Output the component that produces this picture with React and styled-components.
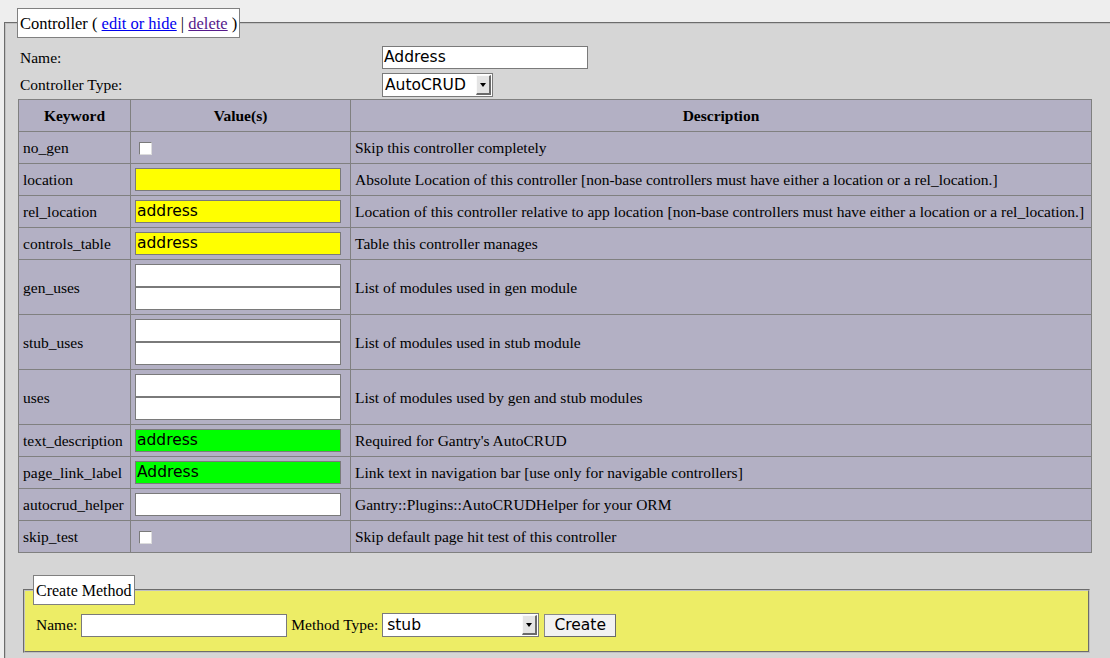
import React from 'react'
import styled, { createGlobalStyle } from 'styled-components'

const GlobalStyle = createGlobalStyle`
  html, body {
    margin: 0;
    padding: 0;
    background: #eeeeee;
    overflow: hidden;
    font-family: "Liberation Serif", "Times New Roman", serif;
    font-size: 15.5px;
    color: #000;
  }
`

const Page = styled.div`
  padding-top: 8px;
  padding-left: 4px;
  width: 1240px;
`

const Fieldset = styled.fieldset`
  margin: 0;
  border: 2px groove rgb(192, 192, 192);
  background: ${props => props.bg || '#d6d6d6'};
  padding: ${props => props.pad || '8px 12px 20px 12px'};
  width: ${props => props.width || 'auto'};
  margin-top: ${props => props.top || '0'};
  margin-left: ${props => props.left || '0'};
  box-sizing: border-box;
`

const Legend = styled.legend`
  background: #fff;
  border: 1px solid #808080;
  padding: 5px 2px 3px 2px;
  line-height: 20px;
  font-size: ${props => props.size || '16.5px'};
  margin-left: ${props => props.shift || '-1px'};
  a {
    color: #0000ee;
  }
  a.visited {
    color: #551a8b;
  }
`

const FormGrid = styled.div`
  display: grid;
  grid-template-columns: 362px auto;
  row-gap: 4px;
  align-items: center;
  padding-left: 2px;
`

const Label = styled.span`
  white-space: nowrap;
`

const TextInput = styled.div`
  box-sizing: border-box;
  width: ${props => props.w || '206px'};
  height: 23px;
  background: ${props => props.bg || '#fff'};
  border: 1px solid #7a7a7a;
  font-family: "DejaVu Sans", Verdana, sans-serif;
  font-size: 15.5px;
  line-height: 21px;
  padding-left: 1px;
  white-space: nowrap;
  overflow: hidden;
`

const FakeSelect = styled.div`
  box-sizing: border-box;
  width: ${props => props.w};
  height: 24px;
  background: #fff;
  border: 1px solid #7a7a7a;
  display: flex;
  align-items: center;
  justify-content: space-between;
  font-family: "DejaVu Sans", Verdana, sans-serif;
  font-size: 15.5px;
  padding-left: ${props => props.padl || '2px'};
`

const ArrowBox = styled.span`
  box-sizing: border-box;
  width: 15px;
  height: 20px;
  margin-right: 1px;
  background: #e4e4e4;
  border-top: 1px solid #fafafa;
  border-left: 1px solid #fafafa;
  border-right: 2px solid #6a6a6a;
  border-bottom: 2px solid #6a6a6a;
  display: flex;
  align-items: center;
  justify-content: center;
  &::after {
    content: '';
    border-left: 3px solid transparent;
    border-right: 3px solid transparent;
    border-top: 4px solid #000;
  }
`

const Table = styled.table`
  border-collapse: collapse;
  width: 1074px;
  margin-top: 2px;
  background: #b3b0c4;
  table-layout: fixed;
`

const Th = styled.th`
  border: 1px solid #808080;
  font-weight: bold;
  padding: 7px 4px;
  text-align: center;
  line-height: 17px;
`

const Td = styled.td`
  border: 1px solid #808080;
  padding: 4px;
  height: 23px;
  white-space: nowrap;
  vertical-align: middle;
  line-height: 17px;
`

const Stack = styled.div`
  display: flex;
  flex-direction: column;
`

const Checkbox = styled.span`
  display: block;
  box-sizing: border-box;
  width: 13px;
  height: 13px;
  margin-left: 4px;
  margin-top: 1px;
  background: #fff;
  border-top: 1px solid #7a7a7a;
  border-left: 1px solid #7a7a7a;
  border-right: 1px solid #dcdcdc;
  border-bottom: 1px solid #dcdcdc;
`

const MethodRow = styled.div`
  display: flex;
  align-items: center;
  gap: 4px;
`

const Button = styled.div`
  box-sizing: border-box;
  width: 72px;
  height: 23px;
  margin-left: 1px;
  background: #f2f2f2;
  border: 1px solid #8a8a8a;
  border-right-color: #6a6a6a;
  border-bottom-color: #6a6a6a;
  display: flex;
  align-items: center;
  justify-content: center;
  font-family: "DejaVu Sans", Verdana, sans-serif;
  font-size: 15.5px;
`

const YELLOW = '#ffff00'
const GREEN = '#00ff00'

const rows = [
  { key: 'no_gen', kind: 'check', desc: 'Skip this controller completely' },
  { key: 'location', kind: 'input', bg: YELLOW, value: '', desc: 'Absolute Location of this controller [non-base controllers must have either a location or a rel_location.]' },
  { key: 'rel_location', kind: 'input', bg: YELLOW, value: 'address', desc: 'Location of this controller relative to app location [non-base controllers must have either a location or a rel_location.]' },
  { key: 'controls_table', kind: 'input', bg: YELLOW, value: 'address', desc: 'Table this controller manages' },
  { key: 'gen_uses', kind: 'multi', desc: 'List of modules used in gen module' },
  { key: 'stub_uses', kind: 'multi', desc: 'List of modules used in stub module' },
  { key: 'uses', kind: 'multi', desc: 'List of modules used by gen and stub modules' },
  { key: 'text_description', kind: 'input', bg: GREEN, value: 'address', desc: "Required for Gantry's AutoCRUD" },
  { key: 'page_link_label', kind: 'input', bg: GREEN, value: 'Address', desc: 'Link text in navigation bar [use only for navigable controllers]' },
  { key: 'autocrud_helper', kind: 'input', value: '', desc: 'Gantry::Plugins::AutoCRUDHelper for your ORM' },
  { key: 'skip_test', kind: 'check', desc: 'Skip default page hit test of this controller' },
]

const ValueCell = ({ row }) => {
  if (row.kind === 'check') return <Checkbox />
  if (row.kind === 'multi')
    return (
      <Stack>
        <TextInput />
        <TextInput />
      </Stack>
    )
  return <TextInput bg={row.bg}>{row.value}</TextInput>
}

const App = () => (
  <Page>
    <GlobalStyle />
    <Fieldset width="1240px">
      <Legend>
        Controller ( <a href="#edit">edit or hide</a> | <a className="visited" href="#delete">delete</a> )
      </Legend>
      <FormGrid>
        <Label>Name:</Label>
        <TextInput>Address</TextInput>
        <Label>Controller Type:</Label>
        <FakeSelect w="111px">
          AutoCRUD
          <ArrowBox />
        </FakeSelect>
      </FormGrid>
      <Table>
        <colgroup>
          <col style={{ width: 112 }} />
          <col style={{ width: 220 }} />
          <col />
        </colgroup>
        <thead>
          <tr>
            <Th>Keyword</Th>
            <Th>Value(s)</Th>
            <Th>Description</Th>
          </tr>
        </thead>
        <tbody>
          {rows.map(row => (
            <tr key={row.key}>
              <Td>{row.key}</Td>
              <Td>
                <ValueCell row={row} />
              </Td>
              <Td>{row.desc}</Td>
            </tr>
          ))}
        </tbody>
      </Table>
      <Fieldset bg="#eded66" width="1067px" top="22px" left="5px" pad="8px 11px 14px 11px">
        <Legend shift="-3px" size="16px">Create Method</Legend>
        <MethodRow>
          <Label>Name:</Label>
          <TextInput w="206px" />
          <Label>Method Type:</Label>
          <FakeSelect w="157px" padl="4px">
            stub
            <ArrowBox />
          </FakeSelect>
          <Button>Create</Button>
        </MethodRow>
      </Fieldset>
    </Fieldset>
  </Page>
)

export default App
